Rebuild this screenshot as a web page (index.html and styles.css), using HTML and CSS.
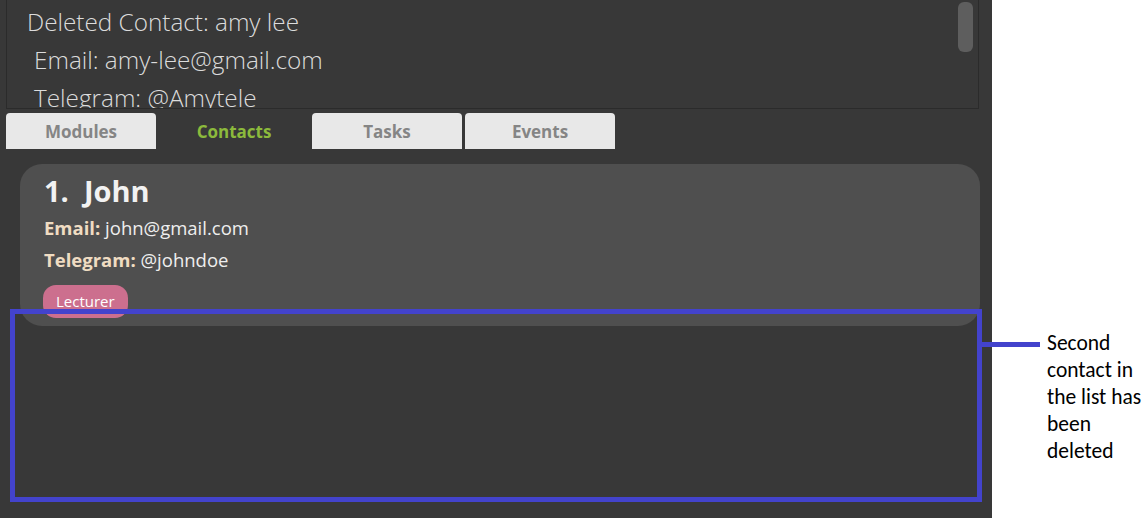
FILE: index.html
```html
<!DOCTYPE html>
<html>
<head>
<meta charset="utf-8">
<link rel="stylesheet" href="styles.css">
</head>
<body>
<div class="page">
  <div class="app">
    <div class="result">
      <div class="result-text">
        <div class="rline">Deleted Contact: amy lee</div>
        <div class="rline indent">Email: amy-lee@gmail.com</div>
        <div class="rline indent">Telegram: @Amytele</div>
      </div>
      <div class="scroll-thumb"></div>
    </div>
    <div class="tabs">
      <div class="tab t-modules">Modules</div>
      <div class="tab t-contacts active">Contacts</div>
      <div class="tab t-tasks">Tasks</div>
      <div class="tab t-events">Events</div>
    </div>
    <div class="list">
      <div class="card">
        <div class="name">1.&nbsp; John</div>
        <div class="field"><span class="label">Email:</span> john@gmail.com</div>
        <div class="field"><span class="label">Telegram:</span> @johndoe</div>
        <div class="tags"><span class="tag">Lecturer</span></div>
      </div>
    </div>
    <div class="highlight"></div>
    <div class="connector"></div>
  </div>
  <div class="note">Second<br>contact in<br>the list has<br>been<br>deleted</div>
</div>
</body>
</html>
```
FILE: styles.css
```css
html, body {
  margin: 0;
  padding: 0;
  background: #ffffff;
}
.page {
  display: flex;
  width: 1146px;
  height: 518px;
  overflow: hidden;
}
.app {
  position: relative;
  width: 992px;
  height: 518px;
  background: #383838;
  flex: none;
  font-family: "Open Sans", "Noto Sans", sans-serif;
}
.result {
  position: relative;
  margin-left: 6px;
  width: 971px;
  height: 108px;
  border: 1px solid #2b2b2b;
  border-top: none;
  background: #383838;
  overflow: hidden;
}
.result-text {
  padding: 0 0 0 20px;
  color: #dcdcdc;
  font-size: 24.3px;
  font-weight: 300;
  line-height: 38px;
  margin-top: 3px;
}
.rline { white-space: pre; }
.indent { padding-left: 7px; }
.scroll-thumb {
  position: absolute;
  right: 5px;
  top: 2px;
  width: 15px;
  height: 50px;
  border-radius: 6px;
  background: #5e5e5e;
}
.tabs {
  display: flex;
  margin: 4px 0 0 6px;
  height: 36px;
}
.tab {
  height: 36px;
  box-sizing: border-box;
  padding-top: 1px;
  line-height: 36px;
  text-align: center;
  font-weight: 700;
  font-size: 17px;
  color: #858585;
  background: #e8e8e8;
  border-radius: 4px 4px 0 0;
}
.t-modules { width: 150px; }
.t-contacts { width: 156px; }
.t-tasks { width: 150px; }
.t-events { width: 150px; margin-left: 3px; }
.tab.active {
  background: transparent;
  color: #8cba3c;
}
.list {
  padding: 15px 12px 0 20px;
}
.card {
  width: 960px;
  height: 162px;
  box-sizing: border-box;
  padding: 6px 0 0 24px;
  background: #4f4f4f;
  border-radius: 22px;
}
.name {
  color: #f2f2f2;
  font-size: 29px;
  font-weight: 700;
  line-height: 42px;
}
.field {
  color: #eeeeee;
  font-size: 18.5px;
  line-height: 32px;
}
.label {
  color: #efdcc2;
  font-weight: 700;
}
.tags {
  margin-top: 9px;
}
.tag {
  display: inline-block;
  height: 33px;
  line-height: 33px;
  padding: 0 13px;
  border-radius: 13px;
  background: #cc6f8e;
  color: #ffffff;
  font-size: 15px;
  margin-left: -1px;
}
.highlight {
  position: absolute;
  left: 10px;
  top: 309px;
  width: 962px;
  height: 183px;
  border: 5px solid #4343cc;
}
.connector {
  position: absolute;
  left: 982px;
  top: 342px;
  width: 58px;
  height: 5px;
  background: #4343cc;
}
.note {
  padding: 330px 0 0 55px;
  font-family: "Carlito", "Liberation Sans", sans-serif;
  font-size: 21.5px;
  line-height: 27px;
  color: #000000;
  white-space: nowrap;
}
```
